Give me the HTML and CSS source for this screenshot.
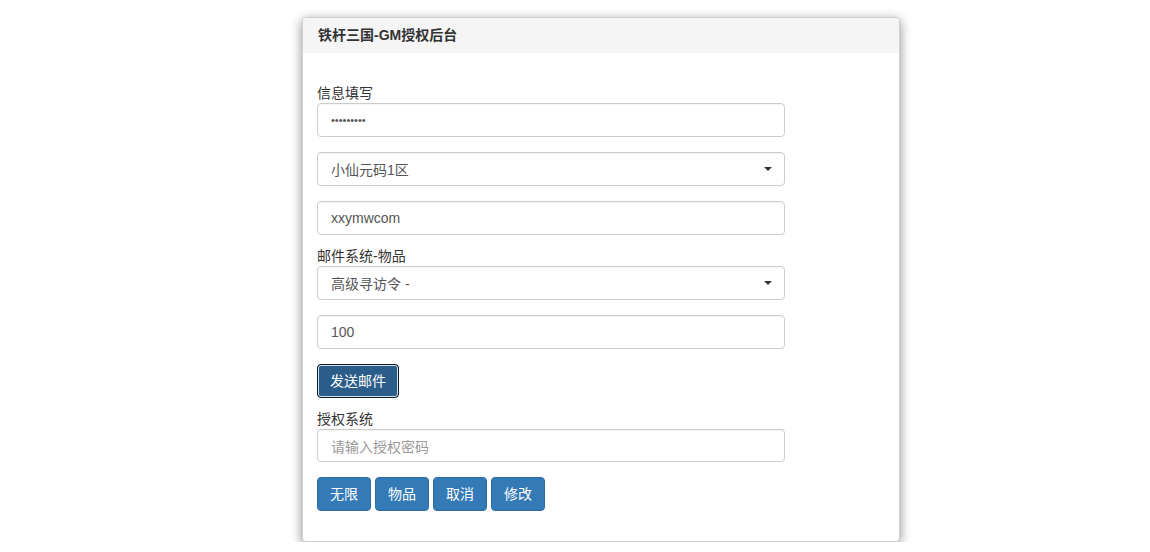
FILE: index.html
```html
<!DOCTYPE html>
<html lang="zh">
<head>
<meta charset="utf-8">
<title>铁杆三国-GM授权后台</title>
<link rel="stylesheet" href="styles.css">
</head>
<body>
<div class="panel">
  <div class="panel-heading">铁杆三国-GM授权后台</div>
  <div class="panel-body">
    <label class="label">信息填写</label>
    <div class="input mb15 dots">•••••••••</div>
    <div class="input select mb15"><span>小仙元码1区</span><span class="caret"></span></div>
    <div class="input mb12">xxymwcom</div>
    <label class="label">邮件系统-物品</label>
    <div class="input select mb15"><span>高级寻访令 -</span><span class="caret"></span></div>
    <div class="input mb15">100</div>
    <div class="mb12"><button class="btn btn-focus">发送邮件</button></div>
    <label class="label">授权系统</label>
    <div class="input placeholder mb15">请输入授权密码</div>
    <div class="btn-row">
      <button class="btn">无限</button>
      <button class="btn">物品</button>
      <button class="btn">取消</button>
      <button class="btn">修改</button>
    </div>
  </div>
</div>
</body>
</html>
```

FILE: styles.css
```css
html, body {
  margin: 0;
  padding: 0;
  background: #ffffff;
}
body {
  font-family: "Liberation Sans", "Noto Sans CJK SC", sans-serif;
  font-size: 14px;
  color: #333;
  padding: 17px 0 0 302px;
}
.panel {
  width: 598px;
  box-sizing: border-box;
  border: 1px solid #cfcfcf;
  border-radius: 4px;
  background: #fff;
  box-shadow: 0 3px 12px rgba(0, 0, 0, 0.45);
  overflow: hidden;
}
.panel-heading {
  background: #f5f5f5;
  padding: 9px 14px 10px 15px;
  line-height: 16px;
  font-weight: bold;
  font-size: 14px;
  color: #333;
}
.panel-body {
  padding: 31px 14px 30px;
  display: flex;
  flex-direction: column;
  align-items: flex-start;
}
.label {
  display: block;
  line-height: 19px;
  height: 19px;
  color: #333;
}
.input {
  width: 468px;
  height: 34px;
  box-sizing: border-box;
  border: 1px solid #ccc;
  border-radius: 4px;
  padding: 0 13px;
  display: flex;
  align-items: center;
  color: #555;
  background: #fff;
  box-shadow: inset 0 1px 1px rgba(0, 0, 0, 0.04);
}
.dots {
  font-size: 11px;
  color: #555;
}
.select {
  justify-content: space-between;
  padding-right: 12px;
}
.caret {
  width: 0;
  height: 0;
  border-left: 4px solid transparent;
  border-right: 4px solid transparent;
  border-top: 4px solid #333;
}
.placeholder {
  color: #999;
  height: 33px;
}
.mb15 { margin-bottom: 15px; }
.mb12 { margin-bottom: 12px; }
.btn {
  font-family: "Liberation Sans", "Noto Sans CJK SC", sans-serif;
  font-size: 14px;
  height: 34px;
  padding: 0 12px;
  border: 1px solid #2e6da4;
  border-radius: 4px;
  background: #337ab7;
  color: #fff;
  line-height: 32px;
}
.btn-focus {
  background: #2a5d89;
  border: 1px solid #0d1b28;
  box-shadow: inset 0 0 0 1px #d8e2ea;
}
.btn-row {
  display: flex;
  gap: 4px;
}
```
